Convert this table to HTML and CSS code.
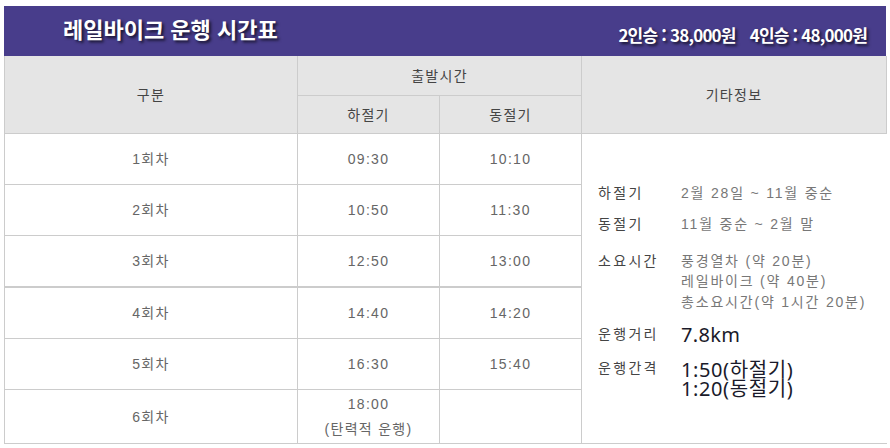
FILE: index.html
```html
<!DOCTYPE html>
<html lang="ko">
<head>
<meta charset="utf-8">
<title>레일바이크 운행 시간표</title>
<link rel="stylesheet" href="styles.css">
</head>
<body>
<div class="wrap">
  <div class="banner">
    <h1 class="title">레일바이크 운행 시간표</h1>
    <div class="price"><span>2인승 : 38,000원</span><span>4인승 : 48,000원</span></div>
  </div>
  <table class="timetable">
    <colgroup>
      <col class="c1"><col class="c2"><col class="c3"><col class="c4">
    </colgroup>
    <thead>
      <tr class="h1row">
        <th rowspan="2">구분</th>
        <th colspan="2">출발시간</th>
        <th rowspan="2">기타정보</th>
      </tr>
      <tr class="h2row">
        <th>하절기</th>
        <th>동절기</th>
      </tr>
    </thead>
    <tbody>
      <tr>
        <td>1회차</td><td>09:30</td><td>10:10</td>
        <td rowspan="6" class="info">
          <div class="info-grid">
            <div class="irow r1"><span class="lab">하절기</span><span class="val">2월 28일 ~ 11월 중순</span></div>
            <div class="irow r2"><span class="lab">동절기</span><span class="val">11월 중순 ~ 2월 말</span></div>
            <div class="irow r3"><span class="lab">소요시간</span><span class="val">풍경열차 (약 20분)<br>레일바이크 (약 40분)<br>총소요시간(약 1시간 20분)</span></div>
            <div class="irow r4"><span class="lab">운행거리</span><span class="val big">7.8km</span></div>
            <div class="irow r5"><span class="lab">운행간격</span><div class="val big multi"><div class="line">1:50(하절기)</div><div class="line">1:20(동절기)</div></div></div>
          </div>
        </td>
      </tr>
      <tr><td>2회차</td><td>10:50</td><td>11:30</td></tr>
      <tr><td>3회차</td><td>12:50</td><td>13:00</td></tr>
      <tr class="split"><td>4회차</td><td>14:40</td><td>14:20</td></tr>
      <tr><td>5회차</td><td>16:30</td><td>15:40</td></tr>
      <tr class="last"><td>6회차</td><td class="two">18:00<br>(탄력적 운행)</td><td></td></tr>
    </tbody>
  </table>
</div>
</body>
</html>
```
FILE: styles.css
```css
html, body {
  margin: 0;
  padding: 0;
  background: #ffffff;
}

.wrap {
  margin: 6px 0 0 4px;
  width: 882px;
}

.banner {
  display: flex;
  justify-content: space-between;
  align-items: flex-start;
  height: 50px;
  background: #483d8b;
  color: #ffffff;
  font-family: "Noto Sans CJK KR", "Noto Sans", sans-serif;
  text-shadow: 2px 2px 3px rgba(0, 0, 0, 0.7);
}

.title {
  margin: 0;
  padding: 9px 0 0 59px;
  font-size: 22px;
  line-height: 26px;
  font-weight: bold;
  letter-spacing: 0;
}

.price {
  display: flex;
  gap: 14px;
  padding: 18px 19px 0 0;
  font-size: 17px;
  line-height: 22px;
  font-weight: bold;
  letter-spacing: -0.8px;
}

.timetable {
  width: 882px;
  table-layout: fixed;
  border-collapse: collapse;
  font-family: "Liberation Sans", "Noto Sans CJK KR", sans-serif;
  font-size: 14px;
  letter-spacing: 1.3px;
  color: #666666;
}

.c1 { width: 293px; }
.c2 { width: 142px; }
.c3 { width: 142px; }
.c4 { width: 305px; }

.timetable th,
.timetable td {
  border: 1px solid #cccccc;
  padding: 0;
  text-align: center;
  vertical-align: middle;
  line-height: 20px;
}

.timetable th {
  background: #e5e5e5;
  font-weight: normal;
  color: #444444;
}

.h1row th {
  border-top: none;
  height: 39px;
}

.h2row th {
  height: 37px;
}

.timetable td {
  height: 50px;
}

.split td {
  border-top: 2px solid #cccccc;
}

.last td {
  height: 53px;
}

.timetable td.two {
  line-height: 25px;
}

.timetable td.info {
  text-align: left;
  padding: 4px 0 0 16px;
  border-right: none;
}

.info-grid {
  display: flex;
  flex-direction: column;
}

.irow {
  display: flex;
  align-items: flex-start;
}

.r2 { margin-top: 11px; }
.r3 { margin-top: 16px; }
.r4 { margin-top: 12px; }
.r5 { margin-top: 12px; }

.lab {
  width: 83px;
  flex: none;
  color: #444444;
  line-height: 20px;
  letter-spacing: 2.3px;
}

.val {
  color: #777777;
  line-height: 20.5px;
  letter-spacing: 1.8px;
}

.big {
  font-family: "Noto Sans", "Noto Sans CJK KR", sans-serif;
  font-size: 20px;
  color: #1a1a2a;
  line-height: 22px;
  letter-spacing: 0.3px;
}

.multi {
  padding-top: 2px;
  letter-spacing: 0.6px;
}

.line {
  height: 19px;
  line-height: 19px;
}
```
